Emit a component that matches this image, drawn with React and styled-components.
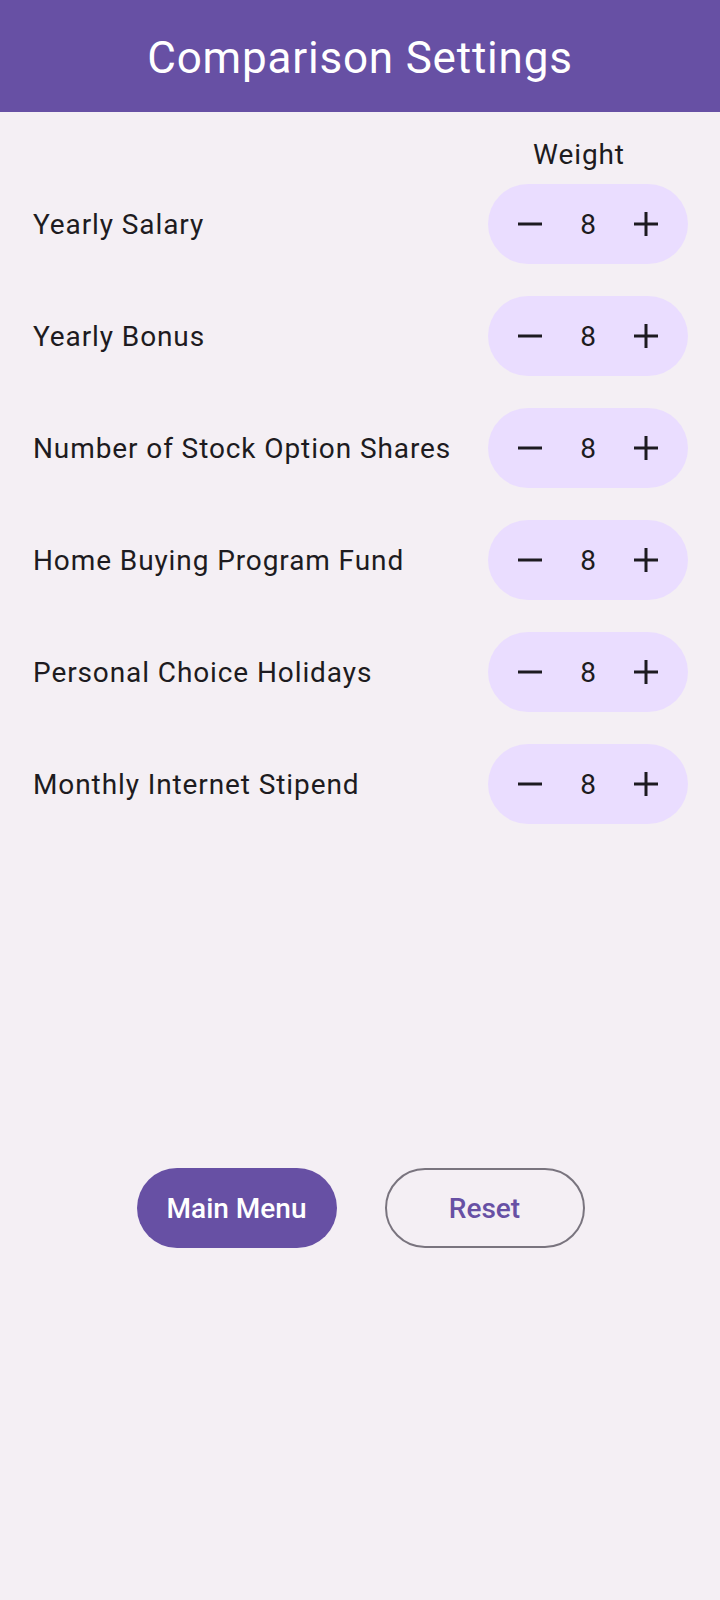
import React, { useState } from "react";
import styled, { createGlobalStyle } from "styled-components";

const GlobalStyle = createGlobalStyle`
  html, body {
    margin: 0;
    padding: 0;
    background: #f4eff4;
  }
  body {
    font-family: Roboto, "Noto Sans", sans-serif;
    color: #1d1b20;
  }
`;

const Page = styled.div`
  min-height: 1600px;
  background: #f4eff4;
  display: flex;
  flex-direction: column;
`;

const Header = styled.header`
  height: 112px;
  padding-top: 3px;
  box-sizing: border-box;
  background: #6750a4;
  display: flex;
  align-items: center;
  justify-content: center;
`;

const Title = styled.h1`
  margin: 0;
  color: #ffffff;
  font-size: 44px;
  font-weight: 400;
  letter-spacing: 0.8px;
`;

const Content = styled.main`
  padding: 25px 32px 0 33px;
  display: flex;
  flex-direction: column;
`;

const WeightHeading = styled.div`
  align-self: flex-end;
  width: 200px;
  padding-right: 18px;
  box-sizing: border-box;
  text-align: center;
  font-size: 28px;
  letter-spacing: 0.9px;
  line-height: 36px;
`;

const List = styled.div`
  margin-top: 11px;
  display: flex;
  flex-direction: column;
  gap: 32px;
`;

const Row = styled.div`
  display: flex;
  align-items: center;
  justify-content: space-between;
  height: 80px;
`;

const Label = styled.span`
  font-size: 28px;
  letter-spacing: 0.9px;
`;

const Stepper = styled.div`
  width: 200px;
  height: 80px;
  border-radius: 40px;
  background: #eaddff;
  display: flex;
  align-items: center;
  justify-content: space-between;
  padding: 0 21px;
  box-sizing: border-box;
`;

const StepButton = styled.button`
  width: 42px;
  height: 42px;
  border: none;
  background: none;
  padding: 0;
  display: flex;
  align-items: center;
  justify-content: center;
  color: #1d1b20;
  cursor: pointer;
`;

const Value = styled.span`
  font-size: 28px;
  width: 30px;
  text-align: center;
`;

const Actions = styled.div`
  margin-top: 344px;
  display: flex;
  justify-content: center;
  gap: 48px;
`;

const ActionButton = styled.button`
  width: 200px;
  height: 80px;
  border-radius: 40px;
  font-family: Roboto, sans-serif;
  font-size: 28px;
  font-weight: 500;
  letter-spacing: 0;
  cursor: pointer;
  box-sizing: border-box;
  background: ${(p) => (p.$outlined ? "transparent" : "#6750a4")};
  color: ${(p) => (p.$outlined ? "#6750a4" : "#ffffff")};
  border: ${(p) => (p.$outlined ? "2px solid #79747e" : "none")};
`;

const MinusIcon = () => (
  <svg width="42" height="42" viewBox="0 0 42 42" stroke="currentColor" strokeWidth="3">
    <line x1="9" y1="21" x2="33" y2="21" />
  </svg>
);

const PlusIcon = () => (
  <svg width="42" height="42" viewBox="0 0 42 42" stroke="currentColor" strokeWidth="3">
    <line x1="9" y1="21" x2="33" y2="21" />
    <line x1="21" y1="9" x2="21" y2="33" />
  </svg>
);

const fields = [
  "Yearly Salary",
  "Yearly Bonus",
  "Number of Stock Option Shares",
  "Home Buying Program Fund",
  "Personal Choice Holidays",
  "Monthly Internet Stipend",
];

const App = () => {
  const [weights, setWeights] = useState(fields.map(() => 8));

  const change = (i, d) =>
    setWeights((w) => w.map((v, j) => (j === i ? Math.max(0, v + d) : v)));

  return (
    <Page>
      <GlobalStyle />
      <Header>
        <Title>Comparison Settings</Title>
      </Header>
      <Content>
        <WeightHeading>Weight</WeightHeading>
        <List>
          {fields.map((f, i) => (
            <Row key={f}>
              <Label>{f}</Label>
              <Stepper>
                <StepButton onClick={() => change(i, -1)}>
                  <MinusIcon />
                </StepButton>
                <Value>{weights[i]}</Value>
                <StepButton onClick={() => change(i, 1)}>
                  <PlusIcon />
                </StepButton>
              </Stepper>
            </Row>
          ))}
        </List>
        <Actions>
          <ActionButton>Main Menu</ActionButton>
          <ActionButton $outlined onClick={() => setWeights(fields.map(() => 8))}>
            Reset
          </ActionButton>
        </Actions>
      </Content>
    </Page>
  );
};

export default App;
